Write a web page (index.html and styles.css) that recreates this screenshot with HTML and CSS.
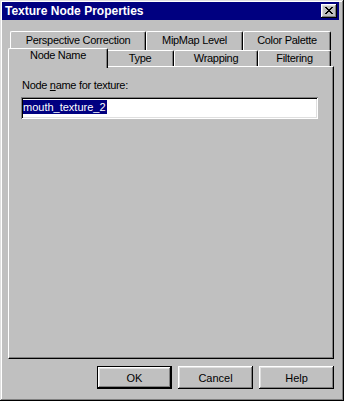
FILE: index.html
```html
<!DOCTYPE html>
<html lang="en">
<head>
    <meta charset="UTF-8">
    <meta name="viewport" content="width=device-width, initial-scale=1.0">
    <link rel="stylesheet" href="styles.css">
    <title>Texture Node Properties</title>
</head>
<body>
    <div class="window">
        <div class="titlebar">
            <span class="title">Texture Node Properties</span>
            <button class="close" aria-label="Close">
                <svg width="8" height="7" viewBox="0 0 8 7" shape-rendering="crispEdges">
                    <path d="M0 0h2v1H0zM6 0h2v1H6zM1 1h2v1H1zM5 1h2v1H5zM2 2h4v1H2zM3 3h2v1H3zM2 4h4v1H2zM1 5h2v1H1zM5 5h2v1H5zM0 6h2v1H0zM6 6h2v1H6z" fill="#000"/>
                </svg>
            </button>
        </div>

        <div class="content">
            <div class="tabs">
                <div class="tab-row back">
                    <div class="tab t-persp">Perspective Correction</div>
                    <div class="tab t-mipmap">MipMap Level</div>
                    <div class="tab t-color">Color Palette</div>
                </div>
                <div class="tab-row front">
                    <div class="tab t-node selected">Node Name</div>
                    <div class="tab t-type">Type</div>
                    <div class="tab t-wrap">Wrapping</div>
                    <div class="tab t-filter">Filtering</div>
                </div>
            </div>

            <div class="panel">
                <label class="field-label" for="nodeName">Node <u>n</u>ame for texture:</label>
                <div class="textbox" id="nodeName"><span class="selection">mouth_texture_2</span></div>
            </div>

            <div class="buttons">
                <button class="btn default">OK</button>
                <button class="btn">Cancel</button>
                <button class="btn">Help</button>
            </div>
        </div>
    </div>
</body>
</html>
```

FILE: styles.css
```css
body {
    margin: 0;
    font-family: "Liberation Sans", Arial, sans-serif;
    font-size: 11px;
    color: #000;
    background-color: #c0c0c0;
}

.window {
    width: 344px;
    height: 401px;
    box-sizing: border-box;
    padding: 2px 5px 4px 2px;
    background-color: #c0c0c0;
    display: flex;
    flex-direction: column;
    box-shadow: inset -1px -1px #000, inset 1px 1px #dfdfdf,
                inset -2px -2px #808080, inset 2px 2px #fff;
}

/* Caption bar */
.titlebar {
    height: 18px;
    background-color: #000080;
    display: flex;
    align-items: center;
    justify-content: space-between;
    padding: 0 2px 0 3px;
}

.title {
    color: #fff;
    font-weight: bold;
    font-size: 12px;
    line-height: 18px;
}

.close {
    width: 16px;
    height: 14px;
    padding: 0;
    border: none;
    background-color: #c0c0c0;
    display: flex;
    align-items: center;
    justify-content: center;
    box-shadow: inset -1px -1px #000, inset 1px 1px #fff,
                inset -2px -2px #808080, inset 2px 2px #dfdfdf;
}

.close svg {
    display: block;
    margin: 0 0 1px 0;
}

.content {
    flex: 1;
    display: flex;
    flex-direction: column;
    padding: 11px 0 8px 6px;
}

/* Tabs */
.tabs {
    padding-left: 2px;
}

.tab-row {
    display: flex;
}

.tab {
    box-sizing: border-box;
    text-align: center;
    letter-spacing: -0.3px;
    border-top: 1px solid #fff;
    border-left: 1px solid #fff;
    border-right: 1px solid #000;
    border-top-left-radius: 2px;
    border-top-right-radius: 2px;
    box-shadow: inset -1px 0 #808080;
    white-space: nowrap;
}

.back .tab {
    height: 19px;
    line-height: 16px;
}

.front .tab {
    height: 16px;
    line-height: 14px;
}

.t-persp { width: 136px; }
.t-mipmap { width: 97px; }
.t-color { width: 88px; }

.t-node { width: 96px; }
.t-type { width: 68px; }
.t-wrap { width: 84px; }
.t-filter { width: 73px; }

.front .tab.selected {
    position: relative;
    z-index: 1;
    width: 100px;
    height: 20px;
    margin: -2px -2px -2px -2px;
    line-height: 13px;
    background-color: #c0c0c0;
}

/* Page */
.panel {
    flex: 1;
    background-color: #c0c0c0;
    padding: 12px 0 0 12px;
    width: 326px;
    box-sizing: border-box;
    border-top: 1px solid #fff;
    border-left: 1px solid #fff;
    border-right: 1px solid #000;
    border-bottom: 1px solid #000;
    box-shadow: inset -1px -1px #808080;
}

.field-label {
    display: block;
    line-height: 13px;
    padding-left: 1px;
    letter-spacing: -0.3px;
}

.field-label u {
    text-decoration-thickness: 1px;
    text-underline-offset: 1px;
}

.textbox {
    width: 297px;
    height: 22px;
    margin-top: 5px;
    box-sizing: border-box;
    padding: 3px 0 0 2px;
    background-color: #fff;
    box-shadow: inset 1px 1px #808080, inset -1px -1px #fff,
                inset 2px 2px #000, inset -2px -2px #dfdfdf;
}

.selection {
    display: inline-block;
    background-color: #000080;
    color: #fff;
    line-height: 14px;
    padding-right: 1px;
}

/* Dialog buttons */
.buttons {
    display: flex;
    justify-content: flex-end;
    gap: 6px;
    margin-top: 7px;
    width: 326px;
}

.btn {
    width: 75px;
    height: 23px;
    padding: 0;
    border: none;
    background-color: #c0c0c0;
    font-family: "Liberation Sans", Arial, sans-serif;
    font-size: 11px;
    color: #000;
    box-shadow: inset -1px -1px #000, inset 1px 1px #fff,
                inset -2px -2px #808080, inset 2px 2px #dfdfdf;
}

.btn.default {
    box-shadow: inset 0 0 0 1px #000, inset -2px -2px #000, inset 2px 2px #fff,
                inset -3px -3px #808080, inset 3px 3px #dfdfdf;
}
```
